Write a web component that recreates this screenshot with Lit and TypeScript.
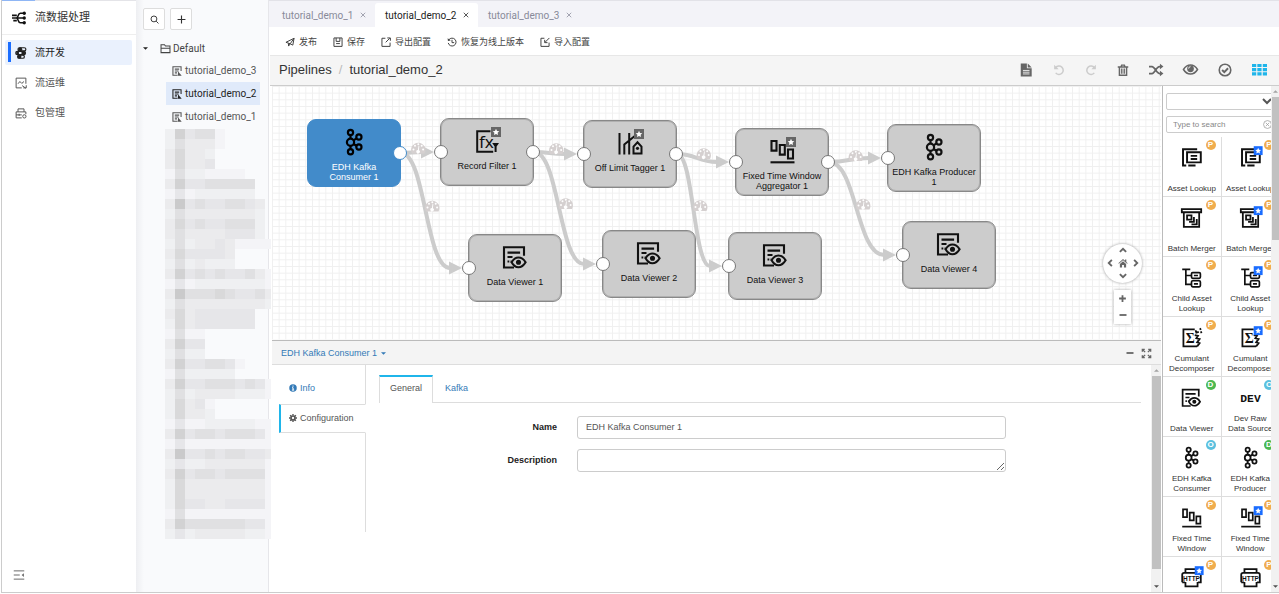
import { LitElement, html, svg, css, nothing } from "lit";
import { customElement, property } from "lit/decorators.js";
import { classMap } from "lit/directives/class-map.js";

const box = (size: number, body: unknown, view = 16) => html`<svg class="glyph"
  width=${size} height=${size} viewBox="0 0 ${view} ${view}" fill="none"
  stroke="currentColor" stroke-width="1.3" aria-hidden="true">${body}</svg>`;

const glyphStyles = css`.glyph { display: block; overflow: visible; flex: none; }`;

/* ---------- stage glyphs, drawn on a 26 unit grid ---------- */
const STAGE: Record<string, unknown> = {
  kafka: svg`<g stroke-width="2.2"><circle cx="9.5" cy="3.4" r="2.6"/><circle cx="9.5" cy="13.2" r="3.6"/>
    <circle cx="9.5" cy="22.8" r="2.6"/><circle cx="17.9" cy="8" r="2.6"/><circle cx="17.9" cy="18" r="2.6"/>
    <path d="M9.5 6v3.6M9.5 16.8v3.5M12.6 11.4l2.8-2M12.6 15l2.8 1.7"/></g>`,
  viewer: svg`<g stroke-width="2.1"><path d="M12 23.5H2V3.3h20v8.5"/><path d="M5.5 8.6h12.6M5.5 13h5M5.5 17.5h1.8M8.6 17.5h1"/>
    <path d="M9.6 18.2c2-3.2 4.2-4.7 6.8-4.7s5.2 1.5 7.2 4.7c-2 3.4-4.4 5-7.2 5s-4.9-1.6-6.8-5z"/>
    <circle cx="16.5" cy="18.3" r="1.5" fill="currentColor"/></g>`,
  filter: svg`<g stroke-width="2"><path d="M16.5 3.2H3.2v20.6h16"/></g>
    <text x="5" y="19.5" font-family="Noto Sans,sans-serif" font-size="17" fill="currentColor" stroke="none">fx</text>
    <path d="M18.2 15h6.8l-2.4 3.6v5.4h-2v-5.4z" fill="currentColor" stroke="none"/>`,
  tagger: svg`<g stroke-width="2"><path d="M2.5 3v21.5M7.3 24.5V14.500L19 5M12.2 3v21.5"/>
    <path d="M16.5 23.6v-7l4-4.3 4 4.3v7z"/></g><circle cx="20.5" cy="18.3" r="1.6" fill="currentColor" stroke="none"/>`,
  window: svg`<g stroke-width="2.1"><path d="M2.5 3h5v9.600h-5zM10.8 7h5v9.600h-5zM19 11.5h5v9h-5z"/><path d="M1.5 24.300h24"/></g>`,
  asset: svg`<g stroke-width="2.4"><path d="M20 2.800H2.5V21M2.5 20v3h4M9 23h9"/><path d="M7.5 6.5h17v12.5h-17z"/>
    <path d="M12 11h8M12 14.8h8"/></g>`,
  merger: svg`<g stroke-width="2.2"><path d="M1 2.5h24v4H1zM3.5 7v17.5h19V7"/><path d="M7.5 10.5h5.500v5H7.5z"/>
    <path d="M10 18.500h6v-6M13 21.500h6.500v-6.500"/></g>`,
  child: svg`<g stroke-width="2.1"><path d="M1.5 3h10M6 3v18.5h6.5M6 10.5h6.5"/>
    <rect x="13" y="7" width="11" height="7" rx="1.5"/><rect x="13" y="17" width="11" height="7.5" rx="1.5"/>
    <path d="M16 10.5h5M16 20.8h5"/></g>`,
  cumulant: svg`<g stroke-width="2.2"><path d="M17 3H3v21h17"/><path d="M18 4l1 3 3-1M23 3l2-1M24 7l2-1M17 10l4 1-2 3 4 1-3 4 3 1-3 4"/></g>
    <text x="6" y="19.5" font-family="Liberation Serif,serif" font-weight="700" font-size="17" fill="currentColor" stroke="none">Σ</text>`,
  dev: svg`<text x="13" y="18" text-anchor="middle" font-family="Liberation Mono,monospace" font-weight="700" font-size="14" fill="currentColor" stroke="none">DEV</text>`,
  http: svg`<g stroke-width="2.2"><path d="M5.5 7V2.5h15V7M5.5 18.5v5.5h15v-5.5"/><path d="M1.5 19V9.5q0-2.3 2.3-2.3h18.4q2.3 0 2.3 2.3V19h-3.5M1.5 19H5"/></g>
    <text x="13" y="17" text-anchor="middle" font-family="Liberation Sans,sans-serif" font-weight="700" font-size="8" fill="currentColor" stroke="none">HTTP</text>`,
};

const star = (fill: string, x = 17, y = -1, s = 10) => svg`<g stroke="none" transform="translate(${x} ${y}) scale(${s / 10})">
  <rect width="10" height="10" fill=${fill} />
  <path fill="#fff" d="M5 1.8l1 2.1 2.3.3-1.7 1.6.4 2.3L5 7l-2 1.1.4-2.3L1.7 4.2 4 3.9z"/></g>`;

/* ---------- interface glyphs, drawn on a 16 unit grid ---------- */
const UI: Record<string, unknown> = {
  brand: svg`<g stroke-width="1.8"><path d="M0 8h13M5 8c2.500 0 1.500-5.500 4.500-5.500H13M5 8c2.500 0 1.500 5.500 4.500 5.500H13M0 5h5.500M1.500 11h4"/></g>
    <g fill="currentColor" stroke="none"><circle cx="14" cy="2.600" r="1.9"/><circle cx="14" cy="8" r="1.9"/><circle cx="14" cy="13.400" r="1.9"/></g>`,
  develop: svg`<g stroke-width="1.6"><rect x="4" y="1" width="10.500" height="4.200" rx="2.100"/><rect x="1" y="5.900" width="13" height="4.200" rx="2.100"/><rect x="3.500" y="10.800" width="9" height="4.200" rx="2.100"/></g>
    <g fill="currentColor" stroke="none"><circle cx="7" cy="3" r="2.600"/><circle cx="11" cy="8" r="2.600"/><circle cx="6" cy="13" r="2.600"/><circle cx="3.500" cy="8" r="2"/></g>`,
  operate: svg`<path d="M14.500 9V1.500h-13v13H9"/><path d="M4 9l2.500-3L9 8.500 12 6"/><path d="M9.500 11.500l5 3.500M11 14.500h4v-3.500"/>`,
  packages: svg`<path d="M1.500 6.500h13v3M1.500 6.500v8H9M1.500 10.500H9M4 6.500V2.500h8v4"/><circle cx="12.500" cy="12.500" r="2.200"/><path d="M5.500 9v3"/>`,
  collapse: svg`<path d="M1 2.500h14M1 8h8M1 13.500h14"/><path d="M14.500 5.500L11.500 8l3 2.500z" fill="currentColor" stroke="none"/>`,
  search: svg`<circle cx="7" cy="7" r="5.200" stroke-width="1.7"/><path d="M11 11l4 4" stroke-width="1.7"/>`,
  plus: svg`<path d="M8 1v14M1 8h14" stroke-width="2"/>`,
  folder: svg`<path d="M1.5 14V2.500h5l1.5 2h6.5V14zM1.5 7.500h13" stroke-width="1.5"/>`,
  script: svg`<g stroke-width="1.7"><path d="M14.500 8V1.200h-13v13.600H9"/><path d="M4.500 5h7M4.500 8h6M4.500 11H8"/></g><path d="M9.500 8.500l6 7h-6z" fill="currentColor" stroke="none"/>`,
  publish: svg`<path d="M1.5 8.500L14.500 2l-2 11-4.200-2.200zM5.500 10l.2 4.500 2.600-3.700L14.500 2" stroke-width="1.6"/>`,
  save: svg`<path d="M1.500 1.500h13v13.500h-13zM5 1.500v5.500h6V1.500M5 10.500h6" stroke-width="1.6"/>`,
  out: svg`<path d="M7 2H1.500v13h13V9M7.500 8.500L14 2M10 1.500h5V6" stroke-width="1.6"/>`,
  into: svg`<path d="M7 2H1.500v13h13V9M15 1.500L8 8.500M7.5 4.500v4.500H12" stroke-width="1.6"/>`,
  restore: svg`<path d="M3 4.500A6.300 6.300 0 112 9.500M8 4.500V9h3.500" stroke-width="1.6"/><path d="M1 2l.5 4.500L6 5.500z" fill="currentColor" stroke="none"/>`,
  file: svg`<path fill="currentColor" stroke="none" d="M2 .5h7V6h5.500v9.500H2zM10 .5L14.500 5H10z"/><path stroke="#f5f5f5" stroke-width="1" d="M4.500 8.500H12M4.500 10.500H12M4.500 12.500H12"/>`,
  undo: svg`<path d="M3.500 5A5.600 5.600 0 113.600 11.800" stroke-width="2"/><path d="M1.500 1v6h6z" fill="currentColor" stroke="none"/>`,
  redo: svg`<path d="M12.500 5A5.600 5.600 0 1012.400 11.800" stroke-width="2"/><path d="M14.500 1v6h-6z" fill="currentColor" stroke="none"/>`,
  trash: svg`<path d="M1 4h14M5.300 4l.9-2.500h3.600l.9 2.500M3.200 4v11h9.600V4" stroke-width="1.900"/><path d="M5.900 6v7M8 6v7M10.100 6v7" stroke-width="1.300"/>`,
  shuffle: svg`<path d="M0 4h3.500c3 0 5 8 8.500 8h1.500M0 12h3.500c3 0 5-8 8.500-8h1.500" stroke-width="2"/><path fill="currentColor" stroke="none" d="M12.500.8L16.500 4l-4 3.200zM12.500 8.800l4 3.200-4 3.200z"/>`,
  eye: svg`<path d="M.5 8C2.500 4.700 5 3.200 8 3.200S13.500 4.700 15.500 8c-2 3.300-4.500 4.800-7.500 4.800S2.500 11.300.5 8z" stroke-width="1.6"/><circle cx="8" cy="7.300" r="3.600" fill="currentColor" stroke="none"/><path d="M6 7a2 2 0 012-2" stroke="#f5f5f5" stroke-width="1"/>`,
  check: svg`<circle cx="8" cy="8" r="6.600" stroke-width="1.800"/><path d="M4.700 8l2.500 2.500 4.300-4.500" stroke-width="2.200"/>`,
  grid: svg`<path fill="currentColor" stroke="none" d="M0 2h4.500v3.400H0zM5.700 2h4.500v3.400H5.700zM11.500 2H16v3.400h-4.500zM0 6.500h4.500v3.400H0zM5.700 6.500h4.500v3.400H5.700zM11.500 6.500H16v3.400h-4.500zM0 11h4.500v3.400H0zM5.700 11h4.500v3.400H5.700zM11.500 11H16v3.400h-4.500z"/>`,
  up: svg`<path d="M3 11l5-5 5 5" stroke-width="3"/>`,
  down: svg`<path d="M3 5l5 5 5-5" stroke-width="3"/>`,
  left: svg`<path d="M11 3L6 8l5 5" stroke-width="3"/>`,
  right: svg`<path d="M5 3l5 5-5 5" stroke-width="3"/>`,
  home: svg`<path fill="currentColor" stroke="none" d="M8 1.500L.5 8.300l1 1L8 3.500l6.500 5.800 1-1-2.200-2V2.500h-2v2zM3 9.500l5-4.400 5 4.400V15H9.500v-4h-3v4H3z"/>`,
  zoomIn: svg`<path d="M8 2v12M2 8h12" stroke-width="3.2"/>`,
  minus: svg`<path d="M1 8h14" stroke-width="3.6"/>`,
  expand: svg`<path d="M2 5.500V2h3.500M2 2l4 4M10.500 2H14v3.500M14 2l-4 4M2 10.500V14h3.500M2 14l4-4M10.500 14H14v-3.500M14 14l-4-4" stroke-width="2"/>`,
  info: svg`<circle cx="8" cy="8" r="7.500" fill="currentColor" stroke="none"/><path d="M8 3v2.500M6 7.500h2.200V12M5.800 12.200h4.600" stroke="#fff" stroke-width="2"/>`,
  gear: svg`<circle cx="8" cy="8" r="4" stroke-width="3.4"/><path d="M8 0v3M8 13v3M0 8h3M13 8h3M2.300 2.300l2.200 2.200M11.500 11.500l2.200 2.200M2.300 13.700l2.200-2.200M11.500 4.500l2.200-2.200" stroke-width="2.8"/>`,
  clear: svg`<circle cx="8" cy="8" r="7"/><path d="M5 5l6 6M11 5l-6 6"/>`,
  close: svg`<path d="M2 2l12 12M14 2L2 14" stroke-width="2"/>`,
};
const ui = (name: string, size: number) => box(size, UI[name]);

/* ---------- data ---------- */
interface Node { x: number; y: number; icon: string; lines: string[]; star?: boolean; selected?: boolean; input?: boolean; output?: boolean; }
const W = 94, H = 68;
const NODES: Node[] = [
  { x: 35, y: 33, icon: "kafka", lines: ["EDH Kafka", "Consumer 1"], selected: true, output: true },
  { x: 168, y: 32, icon: "filter", lines: ["Record Filter 1"], star: true, input: true, output: true },
  { x: 311, y: 34, icon: "tagger", lines: ["Off Limit Tagger 1"], star: true, input: true, output: true },
  { x: 463, y: 42, icon: "window", lines: ["Fixed Time Window", "Aggregator 1"], star: true, input: true, output: true },
  { x: 615, y: 38, icon: "kafka", lines: ["EDH Kafka Producer", "1"], input: true },
  { x: 196, y: 148, icon: "viewer", lines: ["Data Viewer 1"], input: true },
  { x: 330, y: 144, icon: "viewer", lines: ["Data Viewer 2"], input: true },
  { x: 456, y: 146, icon: "viewer", lines: ["Data Viewer 3"], input: true },
  { x: 630, y: 135, icon: "viewer", lines: ["Data Viewer 4"], input: true },
];
const EDGES = [[0, 1], [0, 5], [1, 2], [1, 6], [2, 3], [2, 7], [3, 4], [3, 8]];

const PALETTE = [
  { icon: "asset", lines: ["Asset Lookup"], kind: "P" },
  { icon: "asset", lines: ["Asset Lookup"], kind: "P", star: true },
  { icon: "merger", lines: ["Batch Merger"], kind: "P" },
  { icon: "merger", lines: ["Batch Merger"], kind: "P", star: true },
  { icon: "child", lines: ["Child Asset", "Lookup"], kind: "P" },
  { icon: "child", lines: ["Child Asset", "Lookup"], kind: "P", star: true },
  { icon: "cumulant", lines: ["Cumulant", "Decomposer"], kind: "P" },
  { icon: "cumulant", lines: ["Cumulant", "Decomposer"], kind: "P", star: true },
  { icon: "viewer", lines: ["Data Viewer"], kind: "D" },
  { icon: "dev", lines: ["Dev Raw", "Data Source"], kind: "O" },
  { icon: "kafka", lines: ["EDH Kafka", "Consumer"], kind: "O" },
  { icon: "kafka", lines: ["EDH Kafka", "Producer"], kind: "D" },
  { icon: "window", lines: ["Fixed Time", "Window"], kind: "P" },
  { icon: "window", lines: ["Fixed Time", "Window"], kind: "P", star: true },
  { icon: "http", lines: [], kind: "P", star: true },
  { icon: "http", lines: [], kind: "P" },
];

/* Shade of every masked tile, one string per row. */
const MASK = [
  "27455100000", "25333100000", "36332000000", "36334000000", "15221111000", "37445555500",
  "14122222200", "38454455430", "25333333320", "36454455520", "35333344420", "25233431111",
  "36444430000", "25232220000", "37454544531", "14122222221", "38555654453", "25333333332",
  "36344444400", "26344444400", "15110000000", "37440000000", "25220000000", "37445541000",
  "15222220000", "37445554541", "25233332221", "26341000000", "26332000000", "14112222211",
  "37455455541", "14111111111", "38445455443", "24223333331", "37455455551", "26333333331",
  "26333333331", "26443344441", "15111111111", "37555555441", "24233333221",
];

/* ---------- scroll rail ---------- */
@customElement("scroll-rail")
export class ScrollRail extends LitElement {
  @property({ type: Number }) size = 50;
  static styles = [glyphStyles, css`
    :host { display: flex; flex-direction: column; background: #f1f1f1; box-sizing: border-box; padding-left: 1px; }
    .arrow { height: 11px; flex: none; display: flex; align-items: center; justify-content: center; color: #a3a3a3; }
    .arrow.end { color: #505050; margin-top: auto; }
    .track { flex: 1; min-height: 0; }
    .thumb { background: #c1c1c1; }
  `];
  render() {
    return html`<div class="arrow">${box(5, svg`<path d="M0 12L8 4l8 8z" fill="currentColor" stroke="none"/>`)}</div>
      <div class="track"><div class="thumb" style="height:${this.size}%"></div></div>
      <div class="arrow end">${box(5, svg`<path d="M0 4l8 8 8-8z" fill="currentColor" stroke="none"/>`)}</div>`;
  }
}

/* ---------- pipeline canvas ---------- */
@customElement("pipeline-canvas")
export class PipelineCanvas extends LitElement {
  static styles = [glyphStyles, css`
    :host { display: block; position: relative; overflow: hidden; background: #fff; }
    .edges { position: absolute; inset: 0; width: 100%; height: 100%; }
    .node { position: absolute; box-sizing: border-box; width: 94px; height: 68px; padding: 9px 0 0; border: 1px solid #888;
      outline: 1px solid #8886; outline-offset: -2px; border-radius: 9px; background: #ccc; color: #111; display: flex; flex-direction: column; align-items: center; gap: 7px;
      font: 9px/10px "Liberation Sans", Arial, sans-serif; text-align: center; }
    .node.selected { background: #428bca; border-color: #428bca; outline: none; color: #000; }
    .node.selected .label { color: #fff; }
    .label span { display: block; white-space: nowrap; }
    .port { position: absolute; box-sizing: border-box; width: 14px; height: 14px; top: 26px; border: 1px solid #777; border-radius: 50%; background: #fff; }
    .port.in { left: -7px; }
    .port.out { right: -7px; }
    .selected .port { border-color: #428bca; }
    button { border: 0; padding: 0; background: none; color: #666; display: grid; place-items: center; }
    .tools { position: absolute; right: 19px; bottom: 16px; display: flex; flex-direction: column; align-items: center; gap: 7px; }
    .pad { box-sizing: border-box; width: 39px; height: 39px; border-radius: 50%; background: #fff; box-shadow: 0 0 3px #999;
      display: grid; grid-template: repeat(3, 1fr) / repeat(3, 1fr); grid-template-areas: ". u ." "l h r" ". d ."; }
    .u { grid-area: u; } .l { grid-area: l; } .h { grid-area: h; } .r { grid-area: r; } .d { grid-area: d; }
    .zoom { background: #fff; box-shadow: 0 0 3px #aaa; display: grid; }
    .zoom button { width: 17px; height: 17px; }
  `];
  private edge([a, b]: number[]) {
    const x1 = NODES[a].x + W, y1 = NODES[a].y + H / 2;
    const px = NODES[b].x, y2 = NODES[b].y + H / 2;
    const x2 = px - 18, m = (x1 + x2) / 2, my = (y1 + y2) / 2;
    return svg`<path d="M${x1} ${y1}C${m} ${y1} ${m} ${y2} ${x2} ${y2}" fill="none" stroke="#ccc" stroke-width="4"/>
      <path d="M${px - 19} ${y2 - 6.5}L${px - 6} ${y2}l-13 6.5z" fill="#ccc"/>
      <g transform="translate(${m - 1} ${my - 11})"><path d="M1.5 12A7.2 7.2 0 1114 12z" fill="#d5d0d0"/>
      <g fill="#fff"><circle cx="3" cy="8" r="1"/><circle cx="4.5" cy="4.3" r="1"/><circle cx="7.8" cy="2.7" r="1"/><circle cx="11.2" cy="4.3" r="1"/><circle cx="12.6" cy="8" r="1"/>
      <path d="M8.8 4.5l-.4 4.3a1.7 1.7 0 11-1-.2l.7-4.3z"/></g></g>`;
  }
  render() {
    return html`
      <svg class="edges" aria-hidden="true">
        <defs><pattern id="lines" width="6.667" height="6.667" patternUnits="userSpaceOnUse">
          <path d="M0 .5H7M.5 0V7" stroke="#f0f0f0" stroke-width="1"/></pattern></defs>
        <rect width="100%" height="100%" fill="url(#lines)"/>
        ${EDGES.map((e) => this.edge(e))}
      </svg>
      ${NODES.map((n) => html`<div class=${classMap({ node: true, selected: !!n.selected })} style="left:${n.x}px;top:${n.y}px">
        ${box(26, svg`${STAGE[n.icon]}${n.star ? star("#666") : nothing}`, 26)}
        <div class="label">${n.lines.map((l) => html`<span>${l}</span>`)}</div>
        ${n.input ? html`<i class="port in"></i>` : nothing}${n.output ? html`<i class="port out"></i>` : nothing}
      </div>`)}
      <div class="tools">
        <div class="pad">
          ${[["u", "up"], ["l", "left"], ["h", "home"], ["r", "right"], ["d", "down"]].map(([c, i]) =>
            html`<button class=${c} aria-label=${i}>${ui(i, 10)}</button>`)}
        </div>
        <div class="zoom"><button aria-label="zoom in">${ui("zoomIn", 9)}</button><button aria-label="zoom out">${ui("minus", 8)}</button></div>
      </div>`;
  }
}

/* ---------- stage library ---------- */
@customElement("stage-library")
export class StageLibrary extends LitElement {
  static styles = [glyphStyles, css`
    :host { display: flex; box-sizing: border-box; border-left: 1px solid #bbb; background: #fff; color: #333;
      font: 8px/10px "Liberation Sans", Arial, sans-serif; min-height: 0; }
    .view { flex: 1; min-width: 0; overflow: hidden; }
    .body { width: 117px; }
    .filters { display: grid; gap: 6px; padding: 7px 4px 4px 3px; }
    select, input { box-sizing: border-box; width: 100%; height: 17px; border: 1px solid #ccc; border-radius: 2px; background: #fff; font: inherit; color: #555; margin: 0; }
    input { padding: 0 6px; display: block; }
    input::placeholder { color: #888; opacity: 1; }
    .search { position: relative; }
    .clear { position: absolute; right: 4px; top: 4px; border: 0; padding: 0; background: none; color: #999; }
    .list { display: grid; grid-template-columns: 1fr 1fr; }
    .stage { box-sizing: border-box; height: 60px; border: 0 solid #ddd; border-width: 0 1px 1px 0; padding: 10px 0 2px; position: relative;
      display: flex; flex-direction: column; justify-content: space-between; align-items: center; background: none; font: inherit; color: inherit; text-align: center; }
    .stage > svg { color: #111; }
    .name span { display: block; white-space: nowrap; }
    .kind { position: absolute; right: 5px; top: 3px; width: 10px; height: 10px; border-radius: 50%; color: #fff; font-weight: 700; background: #f0ad4e; }
    .kind.d { background: #4cb850; }
    .kind.o { background: #5bc0de; }
    scroll-rail { width: 8px; }
  `];
  render() {
    return html`<div class="view"><div class="body">
        <div class="filters">
          <select aria-label="Library"><option></option></select>
          <div class="search"><input type="text" placeholder="Type to search" aria-label="Search stages" />
            <button class="clear" aria-label="Clear">${ui("clear", 9)}</button></div>
        </div>
        <div class="list">${PALETTE.map((s) => html`<button class="stage">
          ${box(21, svg`${STAGE[s.icon]}${s.star ? star("#1a6dff", 17, -1, 11) : nothing}`, 26)}
          <span class="name">${s.lines.map((l) => html`<span>${l}</span>`)}</span>
          <span class="kind ${s.kind.toLowerCase()}">${s.kind}</span></button>`)}</div>
      </div></div>
      <scroll-rail size="29.5"></scroll-rail>`;
  }
}

/* ---------- stage settings ---------- */
@customElement("stage-settings")
export class StageSettings extends LitElement {
  static styles = [glyphStyles, css`
    :host { display: flex; flex-direction: column; background: #fff; color: #555; font: 9px/13px "Liberation Sans", Arial, sans-serif; border-top: 1px solid #bbb; min-height: 0; }
    a { color: #337ab7; text-decoration: none; }
    header { box-sizing: border-box; height: 24px; flex: none; padding: 2px 9px 0; display: flex; align-items: center; background: #f4f4f4; border-bottom: 1px solid #ddd; }
    .who { display: flex; align-items: center; gap: 4px; }
    .tools { margin-left: auto; display: flex; align-items: center; gap: 7px; }
    button { border: 0; padding: 0; background: none; color: #666; }
    .content { flex: 1; min-height: 0; display: flex; }
    .side { width: 94px; height: 167px; flex: none; box-sizing: border-box; padding-left: 7px; display: flex; flex-direction: column; }
    .side > * { box-sizing: border-box; border-right: 1px solid #ddd; }
    .side a { display: flex; align-items: center; gap: 3px; padding: 8px 0 0 10px; height: 39px; }
    .side a.on { height: 29px; padding: 0 0 0 8px; border: 1px solid #ddd; border-left: 2px solid #1fb5ea; border-right-color: transparent; color: #555; }
    .side .rest { flex: 1; }
    .main { flex: 1; min-width: 0; padding: 10px 10px 0 13px; }
    .tabs { display: flex; border-bottom: 1px solid #ddd; height: 27px; }
    .tabs a { box-sizing: border-box; height: 28px; padding: 6px 11px 0; border: 1px solid transparent; }
    .tabs a.on { background: #fff; border: 1px solid #ddd; border-top: 2px solid #1fb5ea; border-bottom: 0; padding: 5px 10px 0; color: #555; }
    .form { display: grid; grid-template-columns: 198fr 429fr 135fr; gap: 10px 0; padding-top: 13px; }
    label { grid-column: 1; font-weight: 700; color: #222; text-align: right; padding-right: 20px; line-height: 23px; }
    input, textarea { box-sizing: border-box; display: block; width: 100%; height: 23px; margin: 0; grid-column: 2; padding: 4px 8px; border: 1px solid #ccc; border-radius: 3px; font: inherit; color: #555; background: #fff; }
    scroll-rail { width: 10px; }
  `];
  render() {
    return html`<header><a class="who" href="#">EDH Kafka Consumer 1 ${box(5, svg`<path d="M0 4h16L8 12z" fill="currentColor" stroke="none"/>`)}</a>
        <div class="tools"><button aria-label="Minimise">${ui("minus", 8)}</button><button aria-label="Expand">${ui("expand", 11)}</button></div></header>
      <div class="content">
        <nav class="side"><a href="#">${ui("info", 8)}Info</a><a class="on" href="#">${ui("gear", 8)}Configuration</a><div class="rest"></div></nav>
        <div class="main">
          <nav class="tabs"><a class="on" href="#">General</a><a href="#">Kafka</a></nav>
          <form class="form">
            <label for="name">Name</label><input id="name" type="text" value="EDH Kafka Consumer 1" />
            <label for="desc">Description</label><textarea id="desc" rows="1"></textarea>
          </form>
        </div>
        <scroll-rail size="94"></scroll-rail>
      </div>`;
  }
}

/* ---------- shell ---------- */
@customElement("app-root")
export class AppRoot extends LitElement {
  static styles = [glyphStyles, css`
    :host { display: block; height: 100vh; box-sizing: border-box; padding: 0 0 1px 1px; background: #fff;
      font: 9px/13px Roboto, "Noto Sans CJK SC", sans-serif; color: #444; }
    .shell { display: flex; height: 100%; box-sizing: border-box; border-left: 1px solid #ccc; border-bottom: 1px solid #ccc; }
    button { border: 0; padding: 0; background: none; color: inherit; font: inherit; }
    a { color: inherit; text-decoration: none; }
    .nav { width: 134px; flex: none; display: flex; flex-direction: column; background: #fff; border-top: 1px solid #e4e4e8; box-sizing: border-box; position: relative; }
    .nav::before { content: ""; position: absolute; top: -1px; left: 0; width: 33px; height: 1px; background: #8fb6f5; }
    .brand { height: 33px; display: flex; align-items: center; gap: 9px; padding-left: 10px; font-size: 11px; color: #333; border-bottom: 1px solid #eee; }
    .brand svg { color: #111; }
    .menu { display: grid; gap: 5px; padding: 5px 4px 0 3px; font-size: 10px; color: #555; }
    .menu a { display: flex; align-items: center; gap: 8px; height: 25px; padding-left: 10px; border-radius: 2px; position: relative; }
    .menu a.on { background: #eaf1fd; color: #222; }
    .menu a.on::before { content: ""; position: absolute; left: 3px; top: 2px; width: 3px; height: 20px; background: #1a6dff; }
    .fold { margin: auto 0 11px 11px; align-self: flex-start; color: #666; }
    .tree { width: 133px; flex: none; box-sizing: border-box; background: linear-gradient(90deg, #eeeff2, #f9fafc 8px); border-right: 1px solid #e6e6ea; padding-top: 8px; position: relative; z-index: 1; }
    .acts { display: flex; gap: 5px; padding-left: 7px; }
    .acts button { width: 22px; height: 22px; box-sizing: border-box; border: 1px solid #ddd; border-radius: 2px; background: #fff; display: grid; place-items: center; color: #333; }
    .files { padding-top: 7px; font-size: 10px; color: #555; }
    .group { display: flex; align-items: center; height: 22px; padding-left: 7px; color: #444; }
    .group .folder { margin: 0 2px 0 12px; }
    .file { display: flex; align-items: center; gap: 3px; height: 23px; margin-left: 30px; width: 94px; box-sizing: border-box; padding-left: 6px; white-space: nowrap; }
    .file.on { background: #e0eafa; color: #222; }
    .mask { display: grid; grid-template-columns: repeat(10, 10px) 6px; grid-auto-rows: 10px; margin: 1px 0 0 29px; }
    .s1 { background: #f4f4f7; } .s2 { background: #eff0f2; } .s3 { background: #ebebed; } .s4 { background: #e6e6e9; }
    .s5 { background: #e0e0e2; } .s6 { background: #d9d9da; } .s7 { background: #d2d2d3; } .s8 { background: #cacacb; }
    .work { flex: 1; min-width: 0; display: flex; flex-direction: column; }
    .tabs { display: flex; height: 27px; flex: none; box-sizing: border-box; padding: 2px 0 0 3px; background: #f3f3f8; border-top: 1px solid #e2e2e8; color: #888a99; font-size: 10px; }
    .tab { display: flex; align-items: center; justify-content: space-between; width: 103px; box-sizing: border-box; padding: 0 9px 0 10px; }
    .tab.on { background: #fff; color: #222; border-radius: 3px 3px 0 0; }
    .bar { display: flex; align-items: center; gap: 16px; height: 28px; flex: none; box-sizing: border-box; padding: 2px 0 0 16px; background: #fff; }
    .bar button { display: flex; align-items: center; gap: 4px; white-space: nowrap; color: #444; }
    .head { display: flex; align-items: center; height: 31px; flex: none; box-sizing: border-box; padding: 0 12px 2px 9px; background: #f5f5f5; border-top: 1px solid #e7e7e7; border-bottom: 1px solid #ccc;
      font: 13px/18px "Liberation Sans", Arial, sans-serif; color: #333; margin-left: 1px; }
    .head .sep { padding: 0 7px; color: #bbb; }
    .icons { margin-left: auto; display: flex; align-items: center; gap: 20px; color: #666; }
    .icons .off { color: #ccc; }
    .icons .lit { color: #1fb5ea; }
    .stage { flex: 1; min-height: 0; display: flex; padding-left: 3px; }
    .left { flex: 1; min-width: 0; display: flex; flex-direction: column; }
    pipeline-canvas { flex: 254; }
    stage-settings { flex: 252; }
    stage-library { width: 117px; flex: none; margin-left: 1px; }
  `];
  render() {
    const files = ["tutorial_demo_3", "tutorial_demo_2", "tutorial_demo_1"];
    const tabs = ["tutorial_demo_1", "tutorial_demo_2", "tutorial_demo_3"];
    const acts = [["publish", "发布"], ["save", "保存"], ["out", "导出配置"], ["restore", "恢复为线上版本"], ["into", "导入配置"]];
    const tools = [["file", 14, ""], ["undo", 12, "off"], ["redo", 12, "off"], ["trash", 12, ""], ["shuffle", 14, ""], ["eye", 15, ""], ["check", 14, ""], ["grid", 15, "lit"]] as const;
    return html`<div class="shell">
      <aside class="nav">
        <div class="brand">${ui("brand", 14)}流数据处理</div>
        <nav class="menu">
          <a class="on" href="#">${ui("develop", 12)}流开发</a>
          <a href="#">${ui("operate", 12)}流运维</a>
          <a href="#">${ui("packages", 12)}包管理</a>
        </nav>
        <button class="fold" aria-label="Collapse">${ui("collapse", 12)}</button>
      </aside>
      <aside class="tree">
        <div class="acts"><button aria-label="Search">${ui("search", 9)}</button><button aria-label="Add">${ui("plus", 9)}</button></div>
        <div class="files">
          <div class="group">${box(5, svg`<path d="M0 4h16L8 12z" fill="#222" stroke="none"/>`)}<span class="folder">${ui("folder", 11)}</span>Default</div>
          ${files.map((f, i) => html`<a href="#" class=${classMap({ file: true, on: i === 1 })}>${ui("script", 10)}${f}</a>`)}
        </div>
        <div class="mask">${MASK.map((r) => [...r].map((c) => html`<i class="s${c}"></i>`))}</div>
      </aside>
      <main class="work">
        <div class="tabs">${tabs.map((t, i) => html`<div class=${classMap({ tab: true, on: i === 1 })}><a href="#">${t}</a><button aria-label="Close ${t}">${ui("close", 6)}</button></div>`)}</div>
        <div class="bar">${acts.map(([i, t]) => html`<button>${ui(i, 10)}${t}</button>`)}</div>
        <div class="head"><a href="#">Pipelines</a><span class="sep">/</span><span>tutorial_demo_2</span>
          <div class="icons">${tools.map(([i, s, c]) => html`<button class=${c} aria-label=${i}>${ui(i, s)}</button>`)}</div></div>
        <div class="stage">
          <div class="left"><pipeline-canvas></pipeline-canvas><stage-settings></stage-settings></div>
          <stage-library></stage-library>
        </div>
      </main>
    </div>`;
  }
}
